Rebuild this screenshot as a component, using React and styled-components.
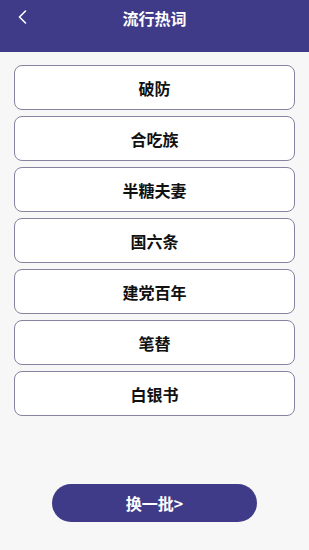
import React, { useState } from 'react';
import styled, { createGlobalStyle } from 'styled-components';

const GlobalStyle = createGlobalStyle`
  html, body {
    margin: 0;
    padding: 0;
    background: #f7f7f7;
    font-family: "Noto Sans CJK SC", "Noto Sans", sans-serif;
  }
`;

const Page = styled.div`
  width: 309px;
  height: 550px;
  display: flex;
  flex-direction: column;
  background: #f7f7f7;
  overflow: hidden;
`;

const Header = styled.header`
  height: 52px;
  flex-shrink: 0;
  background: #3f3b89;
  display: grid;
  grid-template-columns: 40px 1fr 40px;
  align-items: start;
`;

const BackButton = styled.button`
  border: none;
  background: none;
  padding: 0;
  margin: 10px 0 0 17px;
  width: 10px;
  height: 14px;
  display: flex;
  align-items: center;
  justify-content: center;
  cursor: pointer;
`;

const Title = styled.h1`
  margin: 3px 0 0;
  text-align: center;
  color: #fff;
  font-size: 16px;
  font-weight: 700;
  line-height: 30px;
`;

const List = styled.div`
  display: flex;
  flex-direction: column;
  gap: 6px;
  padding: 13px 14px 0;
`;

const WordCard = styled.div`
  height: 45px;
  box-sizing: border-box;
  border: 1px solid #85839f;
  border-radius: 8px;
  background: #fff;
  display: flex;
  align-items: center;
  justify-content: center;
  font-size: 16px;
  font-weight: 700;
  color: #111;
`;

const Footer = styled.div`
  margin-top: auto;
  padding-bottom: 28px;
  display: flex;
  justify-content: center;
`;

const RefreshButton = styled.button`
  width: 205px;
  height: 38px;
  border: none;
  border-radius: 19px;
  background: #3f3b89;
  color: #fff;
  font-family: inherit;
  font-size: 16px;
  font-weight: 700;
  cursor: pointer;
`;

const batches = [
  ['破防', '合吃族', '半糖夫妻', '国六条', '建党百年', '笔替', '白银书'],
];

export default function App() {
  const [batch, setBatch] = useState(0);
  const words = batches[batch % batches.length];

  return (
    <>
      <GlobalStyle />
      <Page>
        <Header>
          <BackButton aria-label="返回">
            <svg width="9" height="14" viewBox="0 0 9 14" fill="none">
              <path d="M7.5 1 L1.5 7 L7.5 13" stroke="#fff" strokeWidth="1.6" strokeLinecap="round" strokeLinejoin="round" />
            </svg>
          </BackButton>
          <Title>流行热词</Title>
          <span />
        </Header>
        <List>
          {words.map((w) => (
            <WordCard key={w}>{w}</WordCard>
          ))}
        </List>
        <Footer>
          <RefreshButton onClick={() => setBatch(batch + 1)}>换一批&gt;</RefreshButton>
        </Footer>
      </Page>
    </>
  );
}
